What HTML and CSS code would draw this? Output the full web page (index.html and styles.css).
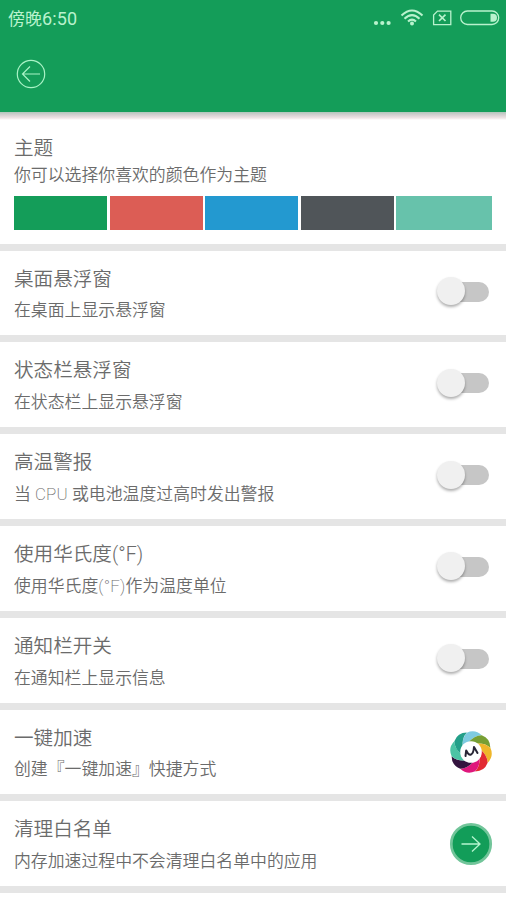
FILE: index.html
```html
<!DOCTYPE html>
<html lang="zh-CN">
<head>
<meta charset="utf-8">
<title>设置</title>
<link rel="stylesheet" href="styles.css">
</head>
<body>
<header class="header">
  <div class="status">
    <span class="time">傍晚<span class="clock">6:50</span></span>
    <svg class="status-icons" width="130" height="26" viewBox="0 0 130 26" fill="none" stroke="#b9f2cd" stroke-width="1.3">
      <g fill="#b9f2cd" stroke="none"><circle cx="6" cy="19" r="2.1"/><circle cx="12.300" cy="19" r="2.1"/><circle cx="18.600" cy="19" r="2.1"/><circle cx="42" cy="19.500" r="2"/></g>
      <g stroke-width="2"><path d="M31.500 11.500Q42 1.500 52.500 11.500M34.500 14.700Q42 7.500 49.500 14.700M38 17.500Q42 13.700 46 17.500"/></g>
      <path d="M67.500 7.100H80.800V20.700H63.600V11Z"/><path d="M69 10.700L75.500 17M75.500 10.700L69 17" stroke-width="1.700"/>
      <rect x="90.700" y="7" width="38" height="13.500" rx="6.700"/><path d="M120.500 9.700H123A4 4 0 0 1 123 17.700H120.500Z" fill="#b9f2cd" stroke="none"/>
    </svg>
  </div>
  <svg class="back" width="30" height="30" viewBox="0 0 30 30" fill="none" stroke="#a9f3c6" stroke-width="1.200"><circle cx="15" cy="15" r="13.700"/><path d="M24 15H6.500M14 7.500L6.500 15L14 22.500"/></svg>
</header>
<main>
  <section class="theme">
    <h2 class="title">主题</h2>
    <p class="desc">你可以选择你喜欢的颜色作为主题</p>
    <div class="swatches"><i class="green"></i><i class="red"></i><i class="blue"></i><i class="gray"></i><i class="mint"></i></div>
  </section>
  <section class="row"><div><h2 class="title">桌面悬浮窗</h2><p class="desc">在桌面上显示悬浮窗</p></div><span class="switch"></span></section>
  <section class="row"><div><h2 class="title">状态栏悬浮窗</h2><p class="desc">在状态栏上显示悬浮窗</p></div><span class="switch"></span></section>
  <section class="row"><div><h2 class="title">高温警报</h2><p class="desc">当 <span class="thin">CPU</span> 或电池温度过高时发出警报</p></div><span class="switch"></span></section>
  <section class="row"><div><h2 class="title">使用华氏度(°F)</h2><p class="desc">使用华氏度<span class="thin">(°F)</span>作为温度单位</p></div><span class="switch"></span></section>
  <section class="row"><div><h2 class="title">通知栏开关</h2><p class="desc">在通知栏上显示信息</p></div><span class="switch"></span></section>
  <section class="row"><div><h2 class="title">一键加速</h2><p class="desc">创建『一键加速』快捷方式</p></div>
    <svg class="action" width="44" height="44" viewBox="-22 -22 44 44">
      <defs><path id="petal" d="M-8.200 -4.800Q-9 -14 -3.500 -19.500Q5 -23 11.300 -16.300Q3.540 -16.260 -2.400 -9.200Z"/></defs>
      <g transform="rotate(-2)">
        <use href="#petal" fill="#7ecbe0"/>
        <use href="#petal" fill="#779f33" transform="rotate(45)"/>
        <use href="#petal" fill="#efb62a" transform="rotate(90)"/>
        <use href="#petal" fill="#e22b32" transform="rotate(135)"/>
        <use href="#petal" fill="#df177c" transform="rotate(180)"/>
        <use href="#petal" fill="#34143f" transform="rotate(225)"/>
        <use href="#petal" fill="#4bc4a5" transform="rotate(270)"/>
        <use href="#petal" fill="#239f89" transform="rotate(315)"/>
      </g>
      <circle r="10.800" fill="#fff"/>
      <path d="M-5.500 4L-4.800 -1.500Q-2.500 3.500 0 2.500Q2.500 1.500 3 -5L6.500 1" fill="none" stroke="#282535" stroke-width="2" stroke-linecap="round" stroke-linejoin="round"/>
    </svg>
  </section>
  <section class="row"><div><h2 class="title">清理白名单</h2><p class="desc">内存加速过程中不会清理白名单中的应用</p></div>
    <svg class="action" width="44" height="44" viewBox="-22 -22 44 44" fill="none"><circle r="19.700" fill="#129d59" stroke="#72c59a" stroke-width="2.700"/><path d="M-9.500 0H9M1 -7.500L9 0L1 7.500" stroke="#b5f5cf" stroke-width="1.300"/></svg>
  </section>
</main>
</body>
</html>
```
FILE: styles.css
```css
* { box-sizing: border-box; }
body {
  margin: 0;
  height: 900px;
  overflow: hidden;
  background: #fff;
  font-family: Roboto, "Noto Sans CJK SC", sans-serif;
  font-weight: 300;
  color: #666;
}
.header { height: 112px; background: #149d59; }
.status { height: 36px; padding: 5px 6px 0 8px; display: flex; justify-content: space-between; }
.time { font: 400 17px/26px "Noto Sans CJK SC", sans-serif; color: #b9f2cd; }
.clock { font-family: Roboto, sans-serif; font-size: 18px; letter-spacing: .1px; }
.status-icons { margin-top: -1px; flex: none; }
.back { display: block; margin: 23px 0 0 16px; }
main { display: block; }
.title, .desc { margin: 0; white-space: nowrap; }
.title { font-size: 19.6px; line-height: 28px; font-weight: 350; color: #6b6b6b; }
.desc { font-size: 16.87px; line-height: 24px; font-weight: 350; color: #6b6b6b; }
.thin { font-weight: 200; letter-spacing: .2px; }
.theme {
  height: 138.6px;
  padding: 23px 14px 0;
  border-bottom: 7px solid #e5e5e5;
  background: linear-gradient(#b1c5bb, #d5d0d1 3px, #eee4e5 6px, #fff 8px);
}
.swatches { margin-top: 9px; display: grid; grid-template-columns: repeat(4, 93px) 1fr; gap: 2.6px; height: 34px; }
.green { background: #149d59; }
.red { background: #dc5d55; }
.blue { background: #2399d0; }
.gray { background: #505559; }
.mint { background: #67c2ab; }
.row {
  height: 91.8px;
  padding: 15px 14px 0;
  display: flex;
  justify-content: space-between;
  border-bottom: 7px solid #e5e5e5;
}
.row .desc { margin-top: 4.8px; }
.switch {
  position: relative;
  width: 40px;
  height: 20px;
  margin: 16px 3px 0 0;
  border-radius: 10px;
  background: #c6c6c6;
}
.switch::before {
  content: "";
  position: absolute;
  left: -12.5px;
  top: -4.5px;
  width: 28px;
  height: 28px;
  border-radius: 50%;
  background: #f0f0f0;
  box-shadow: 0 2px 3px rgba(0, 0, 0, .32);
}
.action { margin: 5.8px -1px 0 0; flex: none; }
```
